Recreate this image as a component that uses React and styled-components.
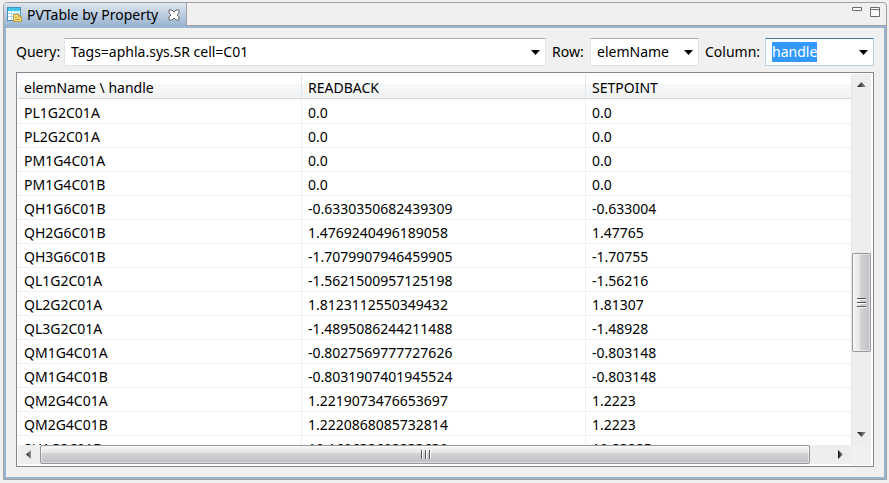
import React from 'react';
import styled, { createGlobalStyle, css } from 'styled-components';

const Global = createGlobalStyle`
  * { box-sizing: border-box; }
  body { margin: 0; background: #f0f0f0; color: #000; }
  body, button, input, select { font: 14px/20px "Noto Sans", "Open Sans", sans-serif; }
`;
const Page = styled.div`height: 100vh; padding: 2px 2px 3px 3px; display: flex;`;
const View = styled.section`
  flex: 1; min-width: 0; display: flex; flex-direction: column;
  border: 1px solid #a0a0a0; border-radius: 4px 4px 0 0; background: #f0f0f0;
`;
const TabBar = styled.header`
  display: flex; justify-content: space-between; height: 23px; border-bottom: 1px solid #a0a0a0;
`;
const Tab = styled.div`
  display: flex; align-items: center; height: 23px; width: 183px; padding-left: 3px;
  border-right: 1px solid #a0a0a0; border-radius: 3px 0 0 0;
  background: linear-gradient(#dfe6ef, #99b4d1);
`;
const TabTitle = styled.h1`
  flex: 1; margin: 0 0 0 4px; font-size: 14px; font-weight: 400; line-height: 20px; white-space: nowrap;
`;
const IconButton = styled.button`
  display: flex; padding: 0; border: 0; background: none;
`;
const Close = styled(IconButton)`margin-right: 6px;`;
const WindowButtons = styled.div`display: flex; gap: 8px; padding: 4px 6px 0 0; align-items: flex-start;`;
const Body = styled.div`
  flex: 1; min-height: 0; display: flex; flex-direction: column; gap: 6px;
  border: 2px solid #99b4d1; padding: 10px;
`;
const Toolbar = styled.div`display: flex; align-items: center; height: 28px;`;
const Label = styled.label`
  flex: none; white-space: nowrap; width: ${p => p.$w}px; margin-left: ${p => (p.$lead ? 6 : 0)}px;
`;
const Combo = styled.div`
  display: flex; align-items: center; height: 28px; background: #fff; padding-right: 5px;
  border: 1px solid #e2e3ea; border-top-color: #abadb3; border-radius: 1px;
  ${p => (p.$w ? css`flex: none; width: ${p.$w}px;` : css`flex: 1; min-width: 0;`)}
  &:has(input:focus) { border-color: #b5cfe7; border-top-color: #3d7bad; }
`;
const Field = styled.input`
  flex: 1; min-width: 0; width: 0; padding: 0 0 0 6px; border: 0; outline: 0; background: none;
  &::selection { background: #3399ff; color: #fff; }
`;
const Frame = styled.div`
  flex: 1; min-height: 0; display: grid; grid-template: minmax(0, 1fr) 20px / minmax(0, 1fr) 20px;
  border: 1px solid #828790; padding: 1px 2px 1px 1px; background: #fff;
`;
const Scroller = styled.div`overflow: hidden;`;
const Table = styled.table`width: 100%; table-layout: fixed; border-collapse: separate; border-spacing: 0;`;
const Th = styled.th`
  width: ${p => p.$w || 'auto'}; height: 25px; padding: 4px 0 0 6px; text-align: left; font-weight: 400; line-height: 20px;
  border-bottom: 1px solid #d5d5d5; border-right: 1px solid #e3e8ee;
  background: linear-gradient(#fff 0 40%, #f7f8fa 41%, #f1f2f4);
  &:last-child { border-right: 0; }
`;
const Td = styled.td`
  height: 24px; padding: 2px 0 0 6px; line-height: 20px; white-space: nowrap;
  border-bottom: 1px solid #f0f0f0; border-right: 1px solid #edf0f5;
  &:last-child { border-right: 0; }
  tr:first-child > & { height: 25px; padding-top: 3px; }
`;
const Bar = styled.div`
  display: flex; background: #eee;
  ${p => (p.$vertical
    ? css`flex-direction: column; border-left: 1px solid #e6e6e6;`
    : css`border-bottom: 1px solid #fff;`)}
`;
const Corner = styled.div`background: #f0f0f0;`;
const Arrow = styled(IconButton)`
  flex: none; align-items: center; justify-content: center;
  ${p => (p.$vertical ? css`height: 21px;` : css`width: 21px;`)}
`;
const Track = styled.div`
  flex: 1; min-width: 0; min-height: 0; display: flex;
  flex-direction: ${p => (p.$vertical ? 'column' : 'row')};
`;
const Space = styled.div`flex: ${p => p.$grow} 1 0;`;
const Thumb = styled.div`
  flex: ${p => p.$grow} 1 0; display: flex; align-items: center; justify-content: center;
  border: 1px solid #979797; border-radius: 2px; box-shadow: inset 0 0 0 1px #ffffff80;
  background: linear-gradient(${p => (p.$vertical ? '90deg' : '180deg')}, #f5f5f5, #e6e6e8 38%, #d5d5d8 40%, #bfbfc4);
`;

const TableIcon = () => (
  <svg width="16" height="16" viewBox="0 0 16 16" aria-hidden="true">
    <rect x="0.5" y="0.5" width="13" height="13" fill="#fff" stroke="#4694bd" />
    <path d="M1 1h12v3H1z" fill="#43c5f4" />
    <path d="M1 6.5h12M1 9.5h12M4.5 4v9M7.5 4v9M10.5 4v9" stroke="#b3dcee" />
    <path d="M6.5 7.5h5l3 2.5v4.5h-8z" fill="#f5df83" stroke="#b79b3c" />
    <path d="M11.5 7.5V10h3M8 10.5h2M8 12.5h5" fill="none" stroke="#c19c32" />
  </svg>
);
const CloseIcon = () => (
  <svg width="12" height="12" viewBox="0 0 12 12" aria-hidden="true">
    <path d="M1 1h3l2 2 2-2h3v3L9 6l2 2v3H8L6 9l-2 2H1V8l2-2-2-2z" fill="#fff" stroke="#666" />
  </svg>
);
const Caret = () => (
  <svg width="9" height="5" viewBox="0 0 9 5" aria-hidden="true"><path d="M0 0h9L4.5 5z" /></svg>
);
const arrowPaths = { up: 'M4.5 2L9 7H0z', down: 'M0 2h9L4.5 7z', left: 'M2 4.5L7 0v9z', right: 'M7 4.5L2 0v9z' };
const ArrowIcon = ({ dir }) => (
  <svg width="9" height="9" viewBox="0 0 9 9" aria-hidden="true">
    <defs><linearGradient id={'g' + dir}><stop stopColor="#111" /><stop offset="1" stopColor="#999" /></linearGradient></defs>
    <path d={arrowPaths[dir]} fill={`url(#g${dir})`} />
  </svg>
);
const Grip = ({ vertical }) => (
  <svg width="11" height="11" viewBox="0 0 11 11" aria-hidden="true">
    <path d={vertical ? 'M1 2.5h9M1 6.5h9M1 10.5h9' : 'M2.5 1v9M6.5 1v9M10.5 1v9'} stroke="#fff" />
    <path d={vertical ? 'M1 1.5h9M1 5.5h9M1 9.5h9' : 'M1.5 1v9M5.5 1v9M9.5 1v9'} stroke="#555" />
  </svg>
);

const ComboBox = ({ id, label, width, value, focused }) => (
  <Combo $w={width}>
    <Field id={id} defaultValue={value} autoFocus={focused} onFocus={e => e.target.select()} />
    <IconButton aria-label={`Show ${label} choices`}><Caret /></IconButton>
  </Combo>
);

const ScrollBar = ({ vertical, before, size, after }) => (
  <Bar $vertical={vertical}>
    <Arrow $vertical={vertical} aria-label={vertical ? 'Scroll up' : 'Scroll left'}><ArrowIcon dir={vertical ? 'up' : 'left'} /></Arrow>
    <Track $vertical={vertical}>
      <Space $grow={before} />
      <Thumb $vertical={vertical} $grow={size}><Grip vertical={vertical} /></Thumb>
      <Space $grow={after} />
    </Track>
    <Arrow $vertical={vertical} aria-label={vertical ? 'Scroll down' : 'Scroll right'}><ArrowIcon dir={vertical ? 'down' : 'right'} /></Arrow>
  </Bar>
);

const rows = [
  ['PL1G2C01A', '0.0', '0.0'],
  ['PL2G2C01A', '0.0', '0.0'],
  ['PM1G4C01A', '0.0', '0.0'],
  ['PM1G4C01B', '0.0', '0.0'],
  ['QH1G6C01B', '-0.6330350682439309', '-0.633004'],
  ['QH2G6C01B', '1.4769240496189058', '1.47765'],
  ['QH3G6C01B', '-1.7079907946459905', '-1.70755'],
  ['QL1G2C01A', '-1.5621500957125198', '-1.56216'],
  ['QL2G2C01A', '1.8123112550349432', '1.81307'],
  ['QL3G2C01A', '-1.4895086244211488', '-1.48928'],
  ['QM1G4C01A', '-0.8027569777727626', '-0.803148'],
  ['QM1G4C01B', '-0.8031907401945524', '-0.803148'],
  ['QM2G4C01A', '1.2219073476653697', '1.2223'],
  ['QM2G4C01B', '1.2220868085732814', '1.2223'],
  ['SH1G2C01B', '19.169632692233639', '19.83285'],
];

export default function App() {
  return (
    <Page>
      <Global />
      <View>
        <TabBar>
          <Tab>
            <TableIcon />
            <TabTitle>PVTable by Property</TabTitle>
            <Close aria-label="Close"><CloseIcon /></Close>
          </Tab>
          <WindowButtons>
            <IconButton aria-label="Minimize">
              <svg width="10" height="10" viewBox="0 0 10 10"><path d="M.5.5h9v3h-9z" fill="#fff" stroke="#6d6d6d" /></svg>
            </IconButton>
            <IconButton aria-label="Maximize">
              <svg width="10" height="10" viewBox="0 0 10 10"><path d="M.5.5h9v9h-9zM1 2.5h8" fill="#fff" stroke="#6d6d6d" /></svg>
            </IconButton>
          </WindowButtons>
        </TabBar>
        <Body>
          <Toolbar>
            <Label htmlFor="query" $w={48}>Query:</Label>
            <ComboBox id="query" label="query" value="Tags=aphla.sys.SR cell=C01" />
            <Label htmlFor="row" $w={38} $lead>Row:</Label>
            <ComboBox id="row" label="row" value="elemName" width={109} />
            <Label htmlFor="column" $w={60} $lead>Column:</Label>
            <ComboBox id="column" label="column" value="handle" width={109} focused />
          </Toolbar>
          <Frame>
            <Scroller>
              <Table>
                <thead>
                  <tr><Th $w="284px">elemName \ handle</Th><Th $w="284px">READBACK</Th><Th>SETPOINT</Th></tr>
                </thead>
                <tbody>
                  {rows.map(r => <tr key={r[0]}>{r.map((v, i) => <Td key={i}>{v}</Td>)}</tr>)}
                </tbody>
              </Table>
            </Scroller>
            <ScrollBar vertical before={158} size={98} after={72} />
            <ScrollBar before={1} size={771} after={20} />
            <Corner />
          </Frame>
        </Body>
      </View>
    </Page>
  );
}
